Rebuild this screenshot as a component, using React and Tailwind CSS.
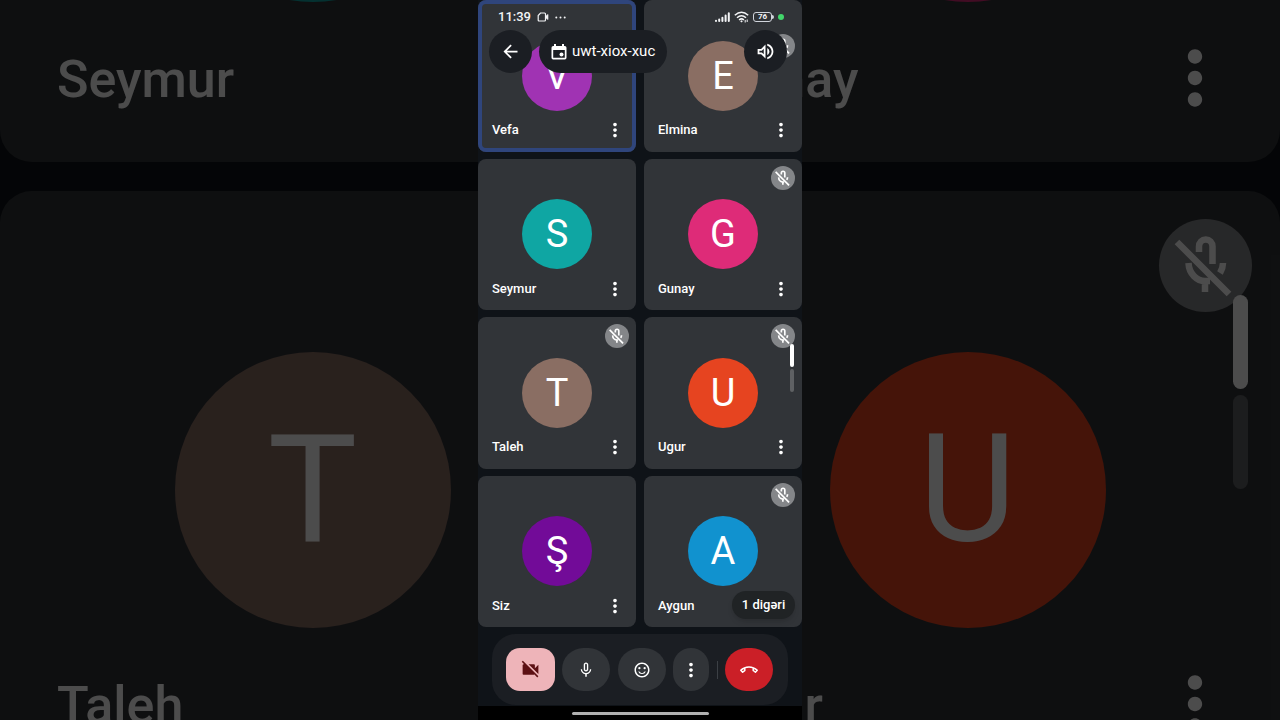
import React from 'react';
import clsx from 'clsx';
import {
  MdArrowBack,
  MdMicNone,
  MdMoreVert,
  MdOutlineCallEnd,
  MdOutlineSentimentSatisfiedAlt,
  MdOutlineVolumeUp,
  MdVideocamOff,
} from 'react-icons/md';

const PARTICIPANTS = [
  { name: 'Vefa', initial: 'V', color: 'bg-[#a033b3]', speaking: true },
  { name: 'Elmina', initial: 'E', color: 'bg-[#8a6e63]', muted: true, underStatusBar: true },
  { name: 'Seymur', initial: 'S', color: 'bg-[#0fa6a3]' },
  { name: 'Gunay', initial: 'G', color: 'bg-[#de2b78]', muted: true },
  { name: 'Taleh', initial: 'T', color: 'bg-[#8a6e63]', muted: true },
  { name: 'Ugur', initial: 'U', color: 'bg-[#e64420]', muted: true },
  { name: 'Siz', initial: 'Ş', color: 'bg-[#720b98]' },
  { name: 'Aygun', initial: 'A', color: 'bg-[#1192cf]', muted: true, more: '1 digəri' },
];

function MicOffIcon() {
  return (
    <svg viewBox="0 0 93 93" className="size-full" fill="none" stroke="currentColor" strokeWidth="6.5">
      <path d="M40 33V27.500A6.700 7 0 0 1 53.500 27.500V45" />
      <path d="M29.500 44C30 55 38 62 46 62H51M46 62V73" />
      <path d="M64 44Q64 49 61 54" />
      <path d="M18 23 70 75" />
    </svg>
  );
}

function Tile({ person }) {
  return (
    <article
      className={clsx(
        'relative flex items-center justify-center rounded-lg bg-[#313438]',
        person.speaking && 'ring-4 ring-inset ring-[#2f457c]'
      )}
    >
      <div
        className={clsx(
          'flex size-[70px] items-center justify-center rounded-full text-[38px] leading-none',
          person.color
        )}
      >
        {person.initial}
      </div>
      {person.muted && (
        <span
          className={clsx(
            'absolute right-[7px] size-6 rounded-full bg-[#848689]',
            person.underStatusBar ? 'top-[34px]' : 'top-[7px]'
          )}
        >
          <MicOffIcon />
        </span>
      )}
      <div className="absolute inset-x-0 bottom-0 flex h-[43px] items-center justify-between pr-[10px] pl-[14px]">
        <span className="text-[13px] font-medium">{person.name}</span>
        {!person.more && (
          <button type="button" aria-label={`${person.name} menu`}>
            <MdMoreVert className="size-[22px]" />
          </button>
        )}
      </div>
      {person.more && (
        <button
          type="button"
          className="absolute right-[7px] bottom-2 h-7 w-[63px] rounded-full bg-[#202325] text-[13px] font-medium shadow-md"
        >
          {person.more}
        </button>
      )}
    </article>
  );
}

// Enlarged, dimmed copy of the middle tiles that fills the sides
function BackdropTile({ person }) {
  return (
    <div className="relative flex items-center justify-center rounded-[32px] bg-[#313438]">
      <div
        className={clsx(
          'flex size-[276px] items-center justify-center rounded-full text-[150px] leading-none',
          person.color
        )}
      >
        {person.initial}
      </div>
      {person.muted && (
        <span className="absolute top-7 right-7 size-[93px] rounded-full bg-[#848689]">
          <MicOffIcon />
        </span>
      )}
      <div className="absolute inset-x-0 bottom-0 flex h-[168px] items-center justify-between pr-[42px] pl-[57px]">
        <span className="pt-1 text-[52px] font-medium">{person.name}</span>
        <MdMoreVert className="size-[86px]" />
      </div>
    </div>
  );
}

function Backdrop() {
  return (
    <div aria-hidden="true" className="absolute inset-0 overflow-hidden bg-[#0f1318]">
      <div className="-mt-[435px] grid auto-rows-[597px] grid-cols-2 gap-x-[30px] gap-y-[29px]">
        {PARTICIPANTS.slice(2, 6).map((person) => (
          <BackdropTile key={person.name} person={person} />
        ))}
      </div>
      <div className="absolute top-[295px] right-8 flex flex-col gap-[6px]">
        <span className="h-[94px] w-[15px] rounded-full bg-white" />
        <span className="h-[94px] w-[15px] rounded-full bg-[#5f6164]" />
      </div>
      <div className="absolute inset-0 bg-black/70" />
    </div>
  );
}

function StatusBar() {
  return (
    <div className="flex h-[34px] items-center justify-between pr-[18px] pl-5 text-gray-100">
      <div className="flex items-center gap-[6px]">
        <span className="text-[13px] font-medium">11:39</span>
        <svg viewBox="0 0 12 10" className="h-[10px] w-3" fill="none" stroke="currentColor">
          <path d="M3.5 1H7.5Q8.5 1 8.5 2V8Q8.5 9 7.5 9H2.2Q1.2 9 1.2 8V3.5Z" strokeWidth="1.2" />
          <path d="M8.7 4.2 11 2.4V7.6L8.7 5.8Z" fill="currentColor" strokeWidth=".6" />
        </svg>
        <svg viewBox="0 0 11 3" className="h-[3px] w-[11px]" fill="currentColor">
          <circle cx="1.3" cy="1.5" r="1" />
          <circle cx="5.5" cy="1.5" r="1" />
          <circle cx="9.7" cy="1.5" r="1" />
        </svg>
      </div>
      <div className="flex items-center gap-1">
        <svg viewBox="0 0 15 10" className="h-[10px] w-[15px]" stroke="currentColor" strokeWidth="2" strokeLinecap="round">
          <path d="M1 9V8.7M4.2 9V7.6M7.4 9V5.8M10.6 9V3.6M13.8 9V1.2" />
        </svg>
        <svg viewBox="0 0 15 12" className="h-3 w-[15px]" fill="none" stroke="currentColor" strokeWidth="1.5">
          <path d="M.8 4.3Q7.5-1.8 14.2 4.3M3 6.8Q7.5 2.6 12 6.8M5.1 9Q7.5 6.8 9.9 9" />
          <path d="M6.2 10.2 7.5 9.2 8.8 10.2 7.5 11.5Z" fill="currentColor" stroke="none" />
          <path d="M11.2 11.5V9M13.2 8.5V11" strokeWidth="1" />
        </svg>
        <span className="flex items-center">
          <span className="flex h-[10px] w-[19px] items-center justify-center rounded-[3px] border border-gray-300 text-[8px] leading-none font-bold">
            76
          </span>
          <span className="h-1 w-[2px] rounded-r-sm bg-gray-300" />
        </span>
        <span className="size-[6px] rounded-full bg-[#42d66b]" />
      </div>
    </div>
  );
}

function CalendarIcon() {
  return (
    <svg viewBox="0 0 16 18" className="h-[18px] w-4" fill="currentColor">
      <path
        fillRule="evenodd"
        d="M3 1h2v2h6V1h2v2h.8A1.7 1.7 0 0 1 15.5 4.7V14.8A1.7 1.7 0 0 1 13.8 16.5H2.2A1.7 1.7 0 0 1 .5 14.8V4.7A1.7 1.7 0 0 1 2.2 3H3ZM2.2 7V14.8H13.8V7Z"
      />
      <circle cx="10.5" cy="11.5" r="2" />
    </svg>
  );
}

function CallHeader() {
  return (
    <header className="absolute inset-x-0 top-0">
      <StatusBar />
      <div className="-mt-1 flex items-center gap-[7px] pr-[15px] pl-[11px]">
        <button
          type="button"
          aria-label="Back"
          className="flex size-[43px] items-center justify-center rounded-full bg-[#1b1e23]"
        >
          <MdArrowBack className="size-[21px]" />
        </button>
        <button
          type="button"
          className="flex h-[43px] items-center gap-[5px] rounded-full bg-[#1b1e23] px-3 text-[15px]"
        >
          <CalendarIcon />
          uwt-xiox-xuc
        </button>
        <button
          type="button"
          aria-label="Audio"
          className="ml-auto flex size-[43px] items-center justify-center rounded-full bg-[#1b1e23]"
        >
          <MdOutlineVolumeUp className="size-[21px]" />
        </button>
      </div>
    </header>
  );
}

function Controls() {
  return (
    <div className="mx-[14px] mt-[7px] flex h-[71px] items-center justify-between rounded-[24px] bg-[#1b1e23] pr-[15px] pl-[14px]">
      <button
        type="button"
        aria-label="Turn on camera"
        className="flex h-[43px] w-[49px] items-center justify-center rounded-[14px] bg-[#eeb4b9] text-[#5c1014]"
      >
        <MdVideocamOff className="size-[21px]" />
      </button>
      <button
        type="button"
        aria-label="Mute"
        className="flex h-[43px] w-12 items-center justify-center rounded-full bg-[#313438]"
      >
        <MdMicNone className="size-[18px]" />
      </button>
      <button
        type="button"
        aria-label="Reactions"
        className="flex h-[43px] w-12 items-center justify-center rounded-full bg-[#313438]"
      >
        <MdOutlineSentimentSatisfiedAlt className="size-[18px]" />
      </button>
      <button
        type="button"
        aria-label="More options"
        className="flex h-[43px] w-9 items-center justify-center rounded-full bg-[#313438]"
      >
        <MdMoreVert className="size-[22px]" />
      </button>
      <span className="h-[18px] w-px bg-[#3c4045]" />
      <button
        type="button"
        aria-label="Leave call"
        className="flex h-[43px] w-12 items-center justify-center rounded-full bg-[#cb1f27]"
      >
        <MdOutlineCallEnd className="size-[18px]" />
      </button>
    </div>
  );
}

export default function App() {
  return (
    <div className="relative min-h-screen overflow-hidden bg-black font-['Roboto',sans-serif] text-white">
      <Backdrop />
      <main className="relative mx-auto flex h-screen w-full max-w-[324px] flex-col bg-[#0f1318]">
        <section className="relative grid flex-1 grid-cols-2 grid-rows-4 gap-x-2 gap-y-[7px]">
          {PARTICIPANTS.map((person) => (
            <Tile key={person.name} person={person} />
          ))}
          {/* page indicator */}
          <div className="absolute top-[344px] right-2 flex flex-col gap-[2px]">
            <span className="h-[23px] w-1 rounded-full bg-white" />
            <span className="h-[23px] w-1 rounded-full bg-[#5f6164]" />
          </div>
        </section>
        <CallHeader />
        <Controls />
        <div className="mt-px flex h-[14px] items-center justify-center bg-black">
          <span className="h-[3px] w-[137px] rounded-full bg-[#b0b0b0]" />
        </div>
      </main>
    </div>
  );
}
